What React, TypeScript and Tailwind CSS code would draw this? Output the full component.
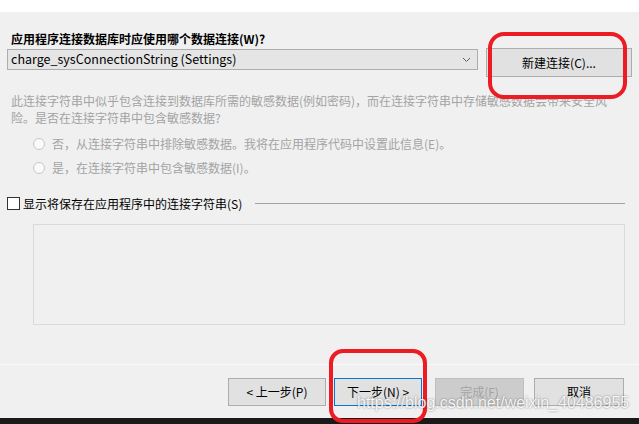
import React from 'react';

const FONT = { fontFamily: '"Noto Sans CJK SC", "Noto Sans", sans-serif' };

const WizardButton: React.FC<{
  label: string;
  className?: string;
  variant?: 'normal' | 'default' | 'disabled';
}> = ({ label, className = '', variant = 'normal' }) => {
  const look =
    variant === 'default'
      ? 'border-[#0078d7] bg-[#e1e1e1] text-black'
      : variant === 'disabled'
      ? 'border-[#bfbfbf] bg-[#cccccc] text-[#a3a3a3]'
      : 'border-[#adadad] bg-[#e1e1e1] text-black';
  return (
    <button
      className={`h-[28px] border text-[12px] leading-none flex items-center justify-center ${look} ${className}`}
    >
      {label}
    </button>
  );
};

const Radio: React.FC<{ label: string }> = ({ label }) => (
  <div className="h-[24px] flex items-center pl-[33px]">
    <span className="w-[12px] h-[12px] rounded-full border border-[#c6c6c6] bg-[#fafafa]" />
    <span className="ml-[7px] text-[12px] text-[#a3a3a3] leading-none">{label}</span>
  </div>
);

export default function App() {
  return (
    <div className="relative w-[639px] h-[424px] overflow-hidden bg-[#f0f0f0] flex flex-col" style={FONT}>
      <div className="h-[12px] bg-white shrink-0" />

      <div className="flex-1 flex flex-col">
        <div className="mt-[19px] pl-[11px] h-[16px] text-[12px] leading-[16px] font-bold text-black">
          应用程序连接数据库时应使用哪个数据连接(W)?
        </div>

        <div className="mt-[1px] flex items-start pl-[7px]">
          <div className="mt-[1px] w-[471px] h-[21px] border border-[#adadad] bg-[#e5e5e5] flex items-center justify-between pl-[3px] pr-[5px]">
            <span className="text-[12.5px] leading-none text-black">charge_sysConnectionString (Settings)</span>
            <svg width="9" height="6" viewBox="0 0 9 6" className="mr-[1px]">
              <path d="M1 1 L4.5 4.5 L8 1" fill="none" stroke="#606060" strokeWidth="1" />
            </svg>
          </div>
          <WizardButton label="新建连接(C)..." className="ml-[8px] w-[146px] !h-[29px]" />
        </div>

        <div className="mt-[15px] pl-[11px] text-[12px] leading-[17px] text-[#a3a3a3]">
          <div>此连接字符串中似乎包含连接到数据库所需的敏感数据(例如密码)，而在连接字符串中存储敏感数据会带来安全风</div>
          <div>险。是否在连接字符串中包含敏感数据?</div>
        </div>

        <div className="mt-[6px]">
          <Radio label="否，从连接字符串中排除敏感数据。我将在应用程序代码中设置此信息(E)。" />
          <Radio label="是，在连接字符串中包含敏感数据(I)。" />
        </div>

        <div className="mt-[12px] h-[23px] flex items-center pl-[7px] pr-[14px]">
          <span className="w-[13px] h-[13px] border border-[#333333] bg-white shrink-0" />
          <span className="ml-[3px] text-[12px] leading-none text-black whitespace-nowrap">
            显示将保存在应用程序中的连接字符串(S)
          </span>
          <div className="ml-[13px] flex-1 h-[1px] bg-[#a0a0a0]" />
        </div>

        <div className="mt-[9px] ml-[33px] w-[592px] h-[101px] border border-[#dadada] bg-[#f0f0f0]" />
      </div>

      <div className="h-[54px] shrink-0 border-t border-[#fafafa] flex items-start pt-[13px] pl-[228px]">
        <WizardButton label="< 上一步(P)" className="w-[98px]" />
        <WizardButton label="下一步(N) >" variant="default" className="ml-[8px] w-[88px]" />
        <WizardButton label="完成(F)" variant="disabled" className="ml-[13px] w-[89px]" />
        <WizardButton label="取消" className="ml-[10px] w-[90px]" />
      </div>

      <div className="h-[6px] shrink-0 bg-[#1a1a1a]" />

      {/* screenshot annotations */}
      <div className="absolute left-[488px] top-[32px] w-[139px] h-[67px] border-[4px] border-[#ed1c24] rounded-[16px]" />
      <div className="absolute left-[329px] top-[349px] w-[98px] h-[74px] border-[4px] border-[#ed1c24] rounded-[14px]" />

      <div
        className="absolute left-[357px] top-[394px] text-[16px] leading-[18px] text-white/90 whitespace-nowrap [text-shadow:0_0_2px_rgba(0,0,0,0.5)]"
        style={{ fontFamily: '"Liberation Sans", Arial, sans-serif' }}
      >
        https://blog.csdn.net/weixin_40486955
      </div>
    </div>
  );
}
